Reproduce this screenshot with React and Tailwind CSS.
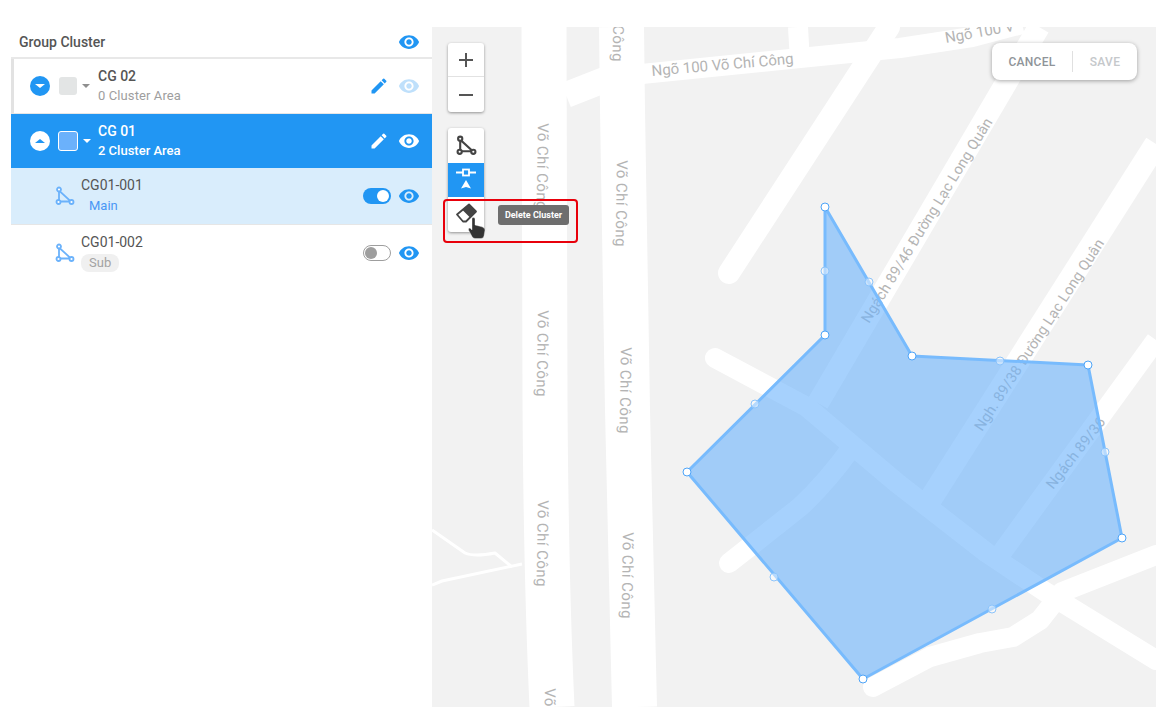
import { MdEdit, MdVisibility, MdAdd, MdRemove } from "react-icons/md";

const polygon = "393,180 480,329 656,338 690,511 431,652 255,445 393,308";
const corners = [[393, 180], [480, 329], [656, 338], [690, 511], [431, 652], [255, 445], [393, 308]];
const mids = [[393, 244], [437, 255], [568, 334], [673, 425], [560, 582], [342, 550], [323, 377]];

const labels = [
  { text: "Ngõ 100 Võ Chí Công", x: 220, y: 49, r: -5, size: 15, gap: 0 },
  { text: "Ngõ 100 V", x: 514, y: 16, r: -10, size: 15, gap: 0 },
  { text: "Võ Chí Công", x: 106, y: 96, r: 91, size: 15, gap: 0.45 },
  { text: "Võ Chí Công", x: 106, y: 283, r: 91, size: 15, gap: 0.45 },
  { text: "Võ Chí Công", x: 106, y: 473, r: 91, size: 15, gap: 0.45 },
  { text: "Võ Chí Công", x: 113, y: 661, r: 91, size: 15, gap: 0.45 },
  { text: "Võ Chí Công", x: 182, y: -52, r: 91, size: 15, gap: 0.45 },
  { text: "Võ Chí Công", x: 185, y: 133, r: 91, size: 15, gap: 0.45 },
  { text: "Võ Chí Công", x: 189, y: 320, r: 91, size: 15, gap: 0.45 },
  { text: "Võ Chí Công", x: 191, y: 505, r: 91, size: 15, gap: 0.45 },
  { text: "Ngách 89/46 Đường Lạc Long Quân", x: 437, y: 297, r: -58.5, size: 14.5, gap: 0.2 },
  { text: "Ngh. 89/38 Đường Lạc Long Quân", x: 550, y: 405, r: -57, size: 14.5, gap: 0.2 },
  { text: "Ngách 89/36", x: 621, y: 463, r: -52, size: 14.5, gap: 0.2 },
];

function MapView() {
  return (
    <svg width="724" height="680" viewBox="0 0 724 680" className="block">
      <rect width="724" height="680" fill="#f2f2f2" />
      <g fill="none" stroke="#fff" strokeLinejoin="round">
        <path d="M112 0 L113 373 Q114 550 120 680" strokeWidth="45" />
        <path d="M189.5 0 L190.5 83 L195.5 383 L202.5 680" strokeWidth="45" />
        <path d="M134 68 L190 46" strokeWidth="26" />
        <path d="M190 49 L358 32 L468 21 L540 10 L590 -3" strokeWidth="20" />
        <path d="M368 35 L366 0" strokeWidth="20" />
        <path d="M457 0 L297 246" strokeWidth="22" strokeLinecap="round" />
        <path d="M607 0 L386 376" strokeWidth="22" />
        <path d="M724 117 L498 473" strokeWidth="23" />
        <path d="M724 313 L568 528" strokeWidth="20" />
        <path d="M283 331 L375 380 L465 456 L555 526 L615 566 L724 633" strokeWidth="20" strokeLinecap="round" />
        <path d="M297 536 L368 480 Q395 455 420 420" strokeWidth="20" strokeLinecap="round" />
        <path d="M441 660 L498 630 L548 616 L581 610 L608 593 L630 565 L724 528" strokeWidth="20" strokeLinecap="round" />
        <path d="M0 503 L33 526 Q42 530 63 526 L80 540" strokeWidth="3" />
        <path d="M0 558 L10 554 L90 537" strokeWidth="3" />
      </g>
      {labels.map((l, i) => (
        <text
          key={i}
          x={l.x}
          y={l.y}
          transform={`rotate(${l.r} ${l.x} ${l.y})`}
          fontFamily="Roboto, sans-serif"
          fontSize={l.size}
          letterSpacing={l.gap}
          fill="#b4b4b4"
        >
          {l.text}
        </text>
      ))}
      <polygon points={polygon} fill="#6bb2fb" fillOpacity="0.6" stroke="#78bbfd" strokeWidth="3" strokeLinejoin="round" />
      {mids.map(([x, y], i) => (
        <circle key={i} cx={x} cy={y} r="4" fill="#fff" fillOpacity="0.45" stroke="#8cc4fb" strokeWidth="1" />
      ))}
      {corners.map(([x, y], i) => (
        <circle key={i} cx={x} cy={y} r="4" fill="#fff" stroke="#4ea4f8" strokeWidth="1" />
      ))}
    </svg>
  );
}

function PolyIcon({ color = "#6bb2fb", size = 20, width = 1.8 }) {
  return (
    <svg width={size} height={size} viewBox="0 0 20 20" fill="none" stroke={color} strokeWidth={width}>
      <path d="M4 4.5 L4 15.5 L16 15.5 Z" />
      <circle cx="4" cy="3.5" r="2" fill="#fff" />
      <circle cx="3.5" cy="16" r="2" fill="#fff" />
      <circle cx="16.5" cy="16" r="2" fill="#fff" />
    </svg>
  );
}

function Toggle({ on }) {
  return on ? (
    <div className="w-7 h-4 rounded-full bg-[#2196f3] flex items-center justify-end pr-[2px]">
      <div className="w-3 h-3 rounded-full bg-white" />
    </div>
  ) : (
    <div className="w-7 h-4 rounded-full bg-white border border-[#9e9e9e] flex items-center pl-[1px]">
      <div className="w-3 h-3 rounded-full bg-[#9e9e9e]" />
    </div>
  );
}

function GroupRow({ name, count, active }) {
  return (
    <div className={`flex items-center pr-3 ${active ? "h-[54px] bg-[#2196f3] pl-[19px]" : "h-[55px] bg-white pl-4 border-l-[3px] border-l-[#e2e2e2] border-b border-b-[#e6e6e6]"}`}>
      <div className={`w-5 h-5 rounded-full flex items-center justify-center ${active ? "bg-white" : "bg-[#2196f3]"}`}>
        <div className={active ? "w-0 h-0 border-x-[5px] border-x-transparent border-b-[4px] border-b-[#2196f3]" : "w-0 h-0 border-x-[5px] border-x-transparent border-t-[4px] border-t-white"} />
      </div>
      <div className={active ? "ml-2 w-5 h-5 rounded-[3px] bg-[#6bb1fb] border border-white" : "ml-[9px] w-[18px] h-[18px] rounded-[3px] bg-[#e3e5e5]"} />
      <div className="ml-1 w-[9px] flex justify-center">
        <div className={`w-0 h-0 border-x-[4px] border-x-transparent border-t-[4px] ${active ? "border-t-white" : "border-t-[#8f8f8f]"}`} />
      </div>
      <div className={`${active ? "ml-[7px]" : "ml-2"} flex-1 flex flex-col gap-[2px]`}>
        <span className={`text-sm leading-[18px] font-medium ${active ? "text-white" : "text-[#555]"}`}>{name}</span>
        <span className={`text-[13px] leading-[18px] ${active ? "text-white font-medium" : "text-[#9e9e9e] tracking-[0.1px]"}`}>{count}</span>
      </div>
      <MdEdit size={20} className={active ? "text-white" : "text-[#2196f3]"} />
      <MdVisibility
        size={22}
        className={`ml-[9px] ${active ? "text-white" : "text-[#bfe0fb]"}`}
      />
    </div>
  );
}

function ClusterRow({ name, active }) {
  return (
    <div className={`flex items-center pl-11 pr-3 ${active ? "h-[57px] bg-[#d9edfc] border-b border-b-[#e6e6e6]" : "h-[56px] bg-white"}`}>
      <PolyIcon />
      <div className="ml-[6px] pb-[2px] flex-1 flex flex-col items-start">
        <span className="text-sm leading-[18px] text-[#555]">{name}</span>
        {active ? (
          <span className="mt-[3px] ml-2 text-[13px] leading-[18px] text-[#4a97f5]">Main</span>
        ) : (
          <span className="mt-[3px] px-2 h-[18px] rounded-lg bg-[#f0f0f0] text-[13px] leading-[18px] text-[#a3a3a3]">Sub</span>
        )}
      </div>
      <Toggle on={active} />
      <MdVisibility size={22} className="ml-[7px] text-[#2196f3]" />
    </div>
  );
}

export default function App() {
  return (
    <div className="w-[1156px] h-[707px] overflow-hidden bg-white flex pt-[27px] font-['Roboto',sans-serif]">
      <aside className="w-[432px] pl-[11px]">
        <div className="h-8 flex items-center justify-between pl-2 pr-3 border-b-2 border-b-[#e8e8e8]">
          <span className="text-sm font-medium text-[#555]">Group Cluster</span>
          <MdVisibility size={22} className="text-[#2196f3]" />
        </div>
        <GroupRow name="CG 02" count="0 Cluster Area" />
        <GroupRow name="CG 01" count="2 Cluster Area" active />
        <ClusterRow name="CG01-001" active />
        <ClusterRow name="CG01-002" />
      </aside>

      <main className="relative w-[724px] h-[680px]">
        <MapView />

        <div className="absolute left-4 top-4 w-9 rounded-[3px] bg-white shadow-[0_1px_3px_rgba(0,0,0,0.4)] text-[#555]">
          <div className="h-[34px] flex items-center justify-center border-b border-b-[#e2e2e2]">
            <MdAdd size={24} />
          </div>
          <div className="h-[35px] flex items-center justify-center">
            <MdRemove size={24} />
          </div>
        </div>

        <div className="absolute left-4 top-[101px] w-9 rounded-[3px] bg-white shadow-[0_1px_3px_rgba(0,0,0,0.4)]">
          <div className="h-[35px] flex items-center justify-center">
            <PolyIcon color="#444" size={21} width={2} />
          </div>
          <div className="h-[34px] bg-[#2196f3] flex items-center justify-center">
            <svg width="22" height="24" viewBox="0 0 22 24" fill="none">
              <path d="M1 4.5 H8 M14 4.5 H21" stroke="#fff" strokeWidth="2" />
              <rect x="8" y="1.5" width="6" height="6" stroke="#fff" strokeWidth="1.8" />
              <path d="M11 12 L16 20.5 L11 19 L6 20.5 Z" fill="#fff" />
            </svg>
          </div>
          <div className="h-[35px] flex items-center justify-center">
            <svg width="24" height="24" viewBox="0 0 24 24" fill="none">
              <path d="M3 11.5 L15 1.5 L22 8.5 L12 18.5 L9 18.5 Z" stroke="#444" strokeWidth="1.8" strokeLinejoin="round" fill="#fff" />
              <path d="M8.5 7 L15 1.5 L22 8.5 L16 14.5 Z" fill="#444" />
            </svg>
          </div>
        </div>

        <svg width="20" height="22" viewBox="0 0 20 22" className="absolute left-[35px] top-[190px]">
          <path
            d="M5 1 Q7 0 8 1.5 L8 8 L14 9.5 Q18 10.5 18 13 L17 19 Q16.5 21.5 14 21.5 L8 21.5 Q6 21.5 5 19.5 L1.5 13 Q1 11 3 11 L5 13 Z"
            fill="#333"
            stroke="#fff"
            strokeOpacity="0.6"
            strokeWidth="0.6"
          />
        </svg>

        <div className="absolute left-[66px] top-[178px] w-[71px] h-5 pt-px rounded-[3px] bg-[#6e6e6e] flex items-center justify-center text-[9px] font-bold text-white">
          Delete Cluster
        </div>

        <div className="absolute left-[11px] top-[172px] w-[135px] h-[44px] rounded-[4px] border-2 border-[#e8000b]" />

        <div className="absolute left-[560px] top-4 w-[145px] h-[37px] rounded-lg bg-white shadow-[0_1px_4px_rgba(0,0,0,0.35)] flex items-center text-xs font-medium tracking-[0.3px]">
          <span className="w-20 text-center text-[#8f9499]">CANCEL</span>
          <div className="w-px h-[21px] bg-[#e0e0e0]" />
          <span className="flex-1 text-center text-[#c5c8cb]">SAVE</span>
        </div>
      </main>
    </div>
  );
}
